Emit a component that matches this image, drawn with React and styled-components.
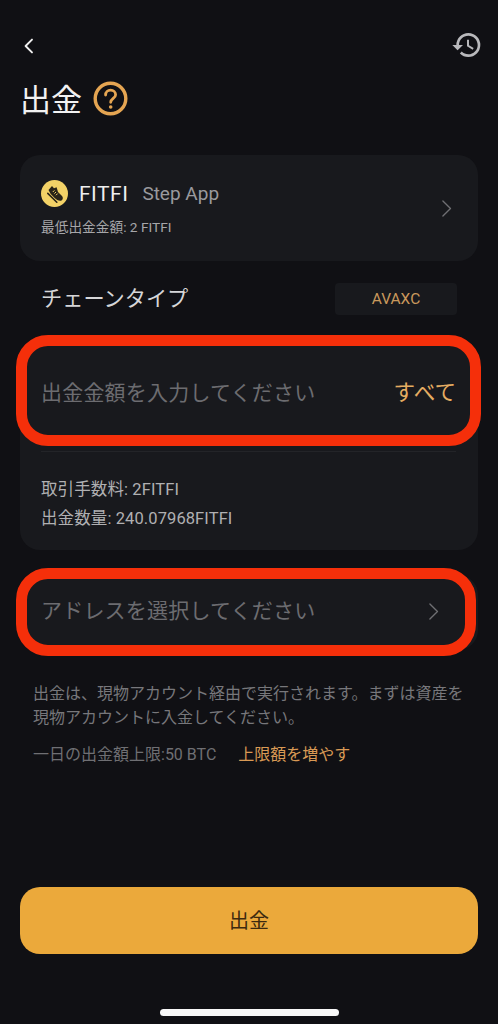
import React from "react";
import styled, { createGlobalStyle } from "styled-components";

const Global = createGlobalStyle`
  html, body { margin: 0; padding: 0; background: #101014; }
  * { box-sizing: border-box; }
  body { font-family: Roboto, "Noto Sans CJK JP", sans-serif; }
`;

const Page = styled.div`
  width: 498px;
  height: 1024px;
  overflow: hidden;
  background: #101014;
  display: flex;
  flex-direction: column;
  padding: 0 20px;
  position: relative;
`;

const TopBar = styled.header`
  height: 32px;
  margin-top: 29px;
  display: flex;
  align-items: center;
  justify-content: space-between;
  margin-right: -5px;
  padding-left: 4px;
`;

const BackSlot = styled.span`
  display: flex;
  padding-top: 2px;
`;

const TitleRow = styled.div`
  display: flex;
  align-items: center;
  gap: 11px;
  margin-top: 18px;
  height: 38px;
`;

const Title = styled.h1`
  margin: 0;
  font: 400 31px/38px "Noto Sans CJK JP", sans-serif;
  color: #f2f2f2;
`;

const Card = styled.section`
  background: #18191d;
  border-radius: 20px;
  position: relative;
`;

const CoinCard = styled(Card)`
  height: 106px;
  margin-top: 38px;
  padding: 0 26px 0 21px;
  display: flex;
  align-items: center;
  justify-content: space-between;
`;

const CoinInfo = styled.div`
  display: flex;
  flex-direction: column;
  align-self: flex-start;
  padding-top: 25px;
`;

const CoinHead = styled.div`
  display: flex;
  align-items: center;
  height: 27px;
  gap: 11px;
`;

const CoinSymbol = styled.span`
  font-size: 21px;
  color: #eeeeee;
  letter-spacing: 0.5px;
`;

const CoinName = styled.span`
  font-size: 19px;
  color: #9a9a9e;
  margin-left: 3px;
`;

const MinAmount = styled.div`
  margin-top: 11px;
  font-size: 13.7px;
  line-height: 18px;
  color: #a6a6a9;
`;

const ChainRow = styled.div`
  height: 32px;
  margin-top: 22px;
  padding: 0 21px;
  display: flex;
  align-items: center;
  justify-content: space-between;
`;

const ChainLabel = styled.span`
  font: 400 21.2px/28px "Noto Sans CJK JP", sans-serif;
  color: #d6d6d8;
  padding-bottom: 4px;
`;

const ChainBadge = styled.span`
  width: 122px;
  height: 32px;
  border-radius: 4px;
  background: #18191d;
  color: #c9985c;
  font-size: 15.5px;
  display: flex;
  align-items: center;
  justify-content: center;
`;

const AmountCard = styled(Card)`
  height: 210px;
  margin-top: 25px;
  padding: 0 22px 0 21px;
`;

const InputRow = styled.div`
  height: 112px;
  padding-bottom: 10px;
  display: flex;
  align-items: center;
  justify-content: space-between;
  border-bottom: 1px solid #232428;
`;

const Placeholder = styled.span`
  font: 400 21px/30px "Noto Sans CJK JP", sans-serif;
  letter-spacing: 0.2px;
  color: #6c6c70;
`;

const AddressPlaceholder = styled(Placeholder)`
  margin-bottom: 5px;
`;

const AllLink = styled.span`
  font: 400 21.6px/30px "Noto Sans CJK JP", sans-serif;
  color: #e5ad62;
`;

const FeeList = styled.div`
  padding-top: 25px;
  display: flex;
  flex-direction: column;
  gap: 4px;
`;

const FeeLine = styled.div`
  font-size: 16.5px;
  line-height: 25px;
  letter-spacing: 0.1px;
  color: #b0b0b2;
`;

const AddressCard = styled(Card)`
  height: 75px;
  margin-top: 25px;
  padding: 0 39px 3px 21px;
  display: flex;
  align-items: center;
  justify-content: space-between;
`;

const Ring = styled.div`
  position: absolute;
  left: -4px;
  top: ${(p) => p.$top}px;
  width: ${(p) => p.$width}px;
  height: ${(p) => p.$height}px;
  border: 11.5px solid #f52f0a;
  border-radius: 32px;
  pointer-events: none;
`;

const Note = styled.p`
  margin: 32px 13px 0;
  font-size: 16px;
  line-height: 24px;
  color: #77777b;
`;

const LimitRow = styled.div`
  margin: 13px 13px 0;
  display: flex;
  gap: 22px;
  font-size: 16px;
  line-height: 24px;
  color: #6f6f73;
`;

const LimitLink = styled.span`
  color: #d99a55;
`;

const SubmitButton = styled.button`
  margin-top: 120px;
  height: 67px;
  width: 100%;
  border: 0;
  border-radius: 20px;
  background: #eba93b;
  color: #3d2a10;
  padding: 0 0 2px;
  font: 400 20px/65px "Noto Sans CJK JP", sans-serif;
`;

const HomeBar = styled.div`
  position: absolute;
  left: 160px;
  bottom: 8px;
  width: 179px;
  height: 7px;
  border-radius: 4px;
  background: #f8f8f8;
`;

const Chevron = ({ dir = "right", size = 22, color = "#6f6f73", w = 1.4 }) => (
  <svg width={size * 0.6} height={size} viewBox="0 0 12 20" fill="none">
    <path
      d={dir === "right" ? "M2 2l8 8-8 8" : "M10 2l-8 8 8 8"}
      stroke={color}
      strokeWidth={w}
      strokeLinecap="round"
      strokeLinejoin="round"
    />
  </svg>
);

const HistoryIcon = () => (
  <svg width="32" height="32" viewBox="0 0 24 24" fill="#b9b9bc">
    <path d="M13 3a9 9 0 0 0-9 9H1l3.89 3.89.07.14L9 12H6c0-3.87 3.13-7 7-7s7 3.13 7 7-3.13 7-7 7c-1.93 0-3.68-.79-4.94-2.06l-1.42 1.42A8.954 8.954 0 0 0 13 21a9 9 0 0 0 0-18zm-1 5v5l4.28 2.54.72-1.21-3.5-2.08V8H12z" />
  </svg>
);

const HelpIcon = () => (
  <svg width="35" height="35" viewBox="0 0 35 35" fill="none">
    <circle cx="17.5" cy="17.5" r="15.3" stroke="#e5a552" strokeWidth="3.4" />
    <path
      d="M12.6 14c0-3 2.2-4.8 5-4.8s5 1.8 5 4.5c0 3.6-4.9 3.8-4.9 7.6"
      stroke="#e5a552"
      strokeWidth="2.8"
      strokeLinecap="round"
    />
    <circle cx="17.7" cy="26" r="1.8" fill="#e5a552" />
  </svg>
);

const CoinIcon = () => (
  <svg width="27" height="27" viewBox="0 0 27 27">
    <circle cx="13.5" cy="13.5" r="13.5" fill="#f3d267" />
    <path
      d="M7.5 10L11 6l2 2.2 2.6-.9 1.4 4.7 4 4c1.6 1.8.8 4.8-1.8 4.8-2 0-4-1.2-5.6-2.8L9.5 13.8z"
      fill="#2a2418"
    />
    <path d="M6.8 13.4l9 8.8" stroke="#2a2418" strokeWidth="1.6" strokeLinecap="round" />
    <path d="M13.4 10.4l-1.6 1.6M15 12l-1.6 1.6M16.6 13.6L15 15.2" stroke="#f3d267" strokeWidth="1" />
  </svg>
);

export default function App() {
  return (
    <>
      <Global />
      <Page>
        <TopBar>
          <BackSlot>
            <Chevron dir="left" size={16} color="#f0f0f0" w={2.4} />
          </BackSlot>
          <HistoryIcon />
        </TopBar>
        <TitleRow>
          <Title>出金</Title>
          <HelpIcon />
        </TitleRow>
        <CoinCard>
          <CoinInfo>
            <CoinHead>
              <CoinIcon />
              <CoinSymbol>FITFI</CoinSymbol>
              <CoinName>Step App</CoinName>
            </CoinHead>
            <MinAmount>最低出金金額: 2 FITFI</MinAmount>
          </CoinInfo>
          <Chevron size={19} />
        </CoinCard>
        <ChainRow>
          <ChainLabel>チェーンタイプ</ChainLabel>
          <ChainBadge>AVAXC</ChainBadge>
        </ChainRow>
        <AmountCard>
          <InputRow>
            <Placeholder>出金金額を入力してください</Placeholder>
            <AllLink>すべて</AllLink>
          </InputRow>
          <FeeList>
            <FeeLine>取引手数料: 2FITFI</FeeLine>
            <FeeLine>出金数量: 240.07968FITFI</FeeLine>
          </FeeList>
          <Ring $top={-5} $width={465} $height={111} />
        </AmountCard>
        <AddressCard>
          <AddressPlaceholder>アドレスを選択してください</AddressPlaceholder>
          <Chevron size={19} />
          <Ring $top={-7} $width={460} $height={88} />
        </AddressCard>
        <Note>出金は、現物アカウント経由で実行されます。まずは資産を現物アカウントに入金してください。</Note>
        <LimitRow>
          <span>一日の出金額上限:50 BTC</span>
          <LimitLink>上限額を増やす</LimitLink>
        </LimitRow>
        <SubmitButton>出金</SubmitButton>
        <HomeBar />
      </Page>
    </>
  );
}
